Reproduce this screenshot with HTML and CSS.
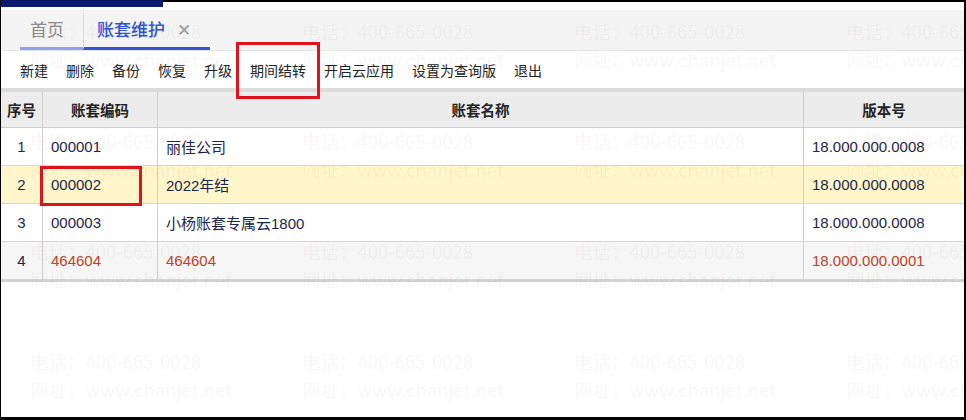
FILE: index.html
```html
<!DOCTYPE html>
<html lang="zh-CN">
<head>
  <meta charset="UTF-8">
  <title>账套维护</title>
  <link rel="stylesheet" href="styles.css">
</head>
<body>
  <div class="screen">

    <!-- top strip -->
    <div class="topline">
      <div class="brand"></div>
      <div class="rest"></div>
    </div>

    <!-- tabs -->
    <div class="tabbar">
      <div class="tab">首页</div>
      <div class="tab active">账套维护 <span class="close">✕</span></div>
    </div>

    <!-- toolbar -->
    <div class="toolbar">
      <span class="tool">新建</span>
      <span class="tool">删除</span>
      <span class="tool">备份</span>
      <span class="tool">恢复</span>
      <span class="tool">升级</span>
      <span class="tool">期间结转</span>
      <span class="tool">开启云应用</span>
      <span class="tool">设置为查询版</span>
      <span class="tool">退出</span>
    </div>

    <!-- account list -->
    <div class="grid">
      <div class="row head">
        <div class="cell c-no">序号</div>
        <div class="cell c-code">账套编码</div>
        <div class="cell c-name">账套名称</div>
        <div class="cell c-ver">版本号</div>
      </div>
      <div class="row">
        <div class="cell c-no">1</div>
        <div class="cell c-code">000001</div>
        <div class="cell c-name">丽佳公司</div>
        <div class="cell c-ver">18.000.000.0008</div>
      </div>
      <div class="row selected">
        <div class="cell c-no">2</div>
        <div class="cell c-code">000002</div>
        <div class="cell c-name">2022年结</div>
        <div class="cell c-ver">18.000.000.0008</div>
      </div>
      <div class="row">
        <div class="cell c-no">3</div>
        <div class="cell c-code">000003</div>
        <div class="cell c-name">小杨账套专属云1800</div>
        <div class="cell c-ver">18.000.000.0008</div>
      </div>
      <div class="row old">
        <div class="cell c-no">4</div>
        <div class="cell c-code">464604</div>
        <div class="cell c-name">464604</div>
        <div class="cell c-ver">18.000.000.0001</div>
      </div>
    </div>

    <!-- watermark over everything -->
    <div class="watermark">
      <div class="wm"><span>电话：400-665-0028</span><span>网址：www.chanjet.net</span></div>
      <div class="wm"><span>电话：400-665-0028</span><span>网址：www.chanjet.net</span></div>
      <div class="wm"><span>电话：400-665-0028</span><span>网址：www.chanjet.net</span></div>
      <div class="wm"><span>电话：400-665-0028</span><span>网址：www.chanjet.net</span></div>
      <div class="wm"><span>电话：400-665-0028</span><span>网址：www.chanjet.net</span></div>
      <div class="wm"><span>电话：400-665-0028</span><span>网址：www.chanjet.net</span></div>
      <div class="wm"><span>电话：400-665-0028</span><span>网址：www.chanjet.net</span></div>
      <div class="wm"><span>电话：400-665-0028</span><span>网址：www.chanjet.net</span></div>
      <div class="wm"><span>电话：400-665-0028</span><span>网址：www.chanjet.net</span></div>
      <div class="wm"><span>电话：400-665-0028</span><span>网址：www.chanjet.net</span></div>
      <div class="wm"><span>电话：400-665-0028</span><span>网址：www.chanjet.net</span></div>
      <div class="wm"><span>电话：400-665-0028</span><span>网址：www.chanjet.net</span></div>
      <div class="wm"><span>电话：400-665-0028</span><span>网址：www.chanjet.net</span></div>
      <div class="wm"><span>电话：400-665-0028</span><span>网址：www.chanjet.net</span></div>
      <div class="wm"><span>电话：400-665-0028</span><span>网址：www.chanjet.net</span></div>
      <div class="wm"><span>电话：400-665-0028</span><span>网址：www.chanjet.net</span></div>
    </div>

    <!-- red annotation boxes -->
    <div class="mark mark-tool"></div>
    <div class="mark mark-code"></div>
  </div>
</body>
</html>
```

FILE: styles.css
```css
body {
  margin: 0;
  padding: 0;
  background: #fff;
  font-family: "Noto Sans CJK SC", "Liberation Sans", sans-serif;
  overflow: hidden;
}

/* screenshot frame */
.screen {
  position: relative;
  width: 966px;
  height: 420px;
  box-sizing: border-box;
  border-left: 1px solid #000;
  border-right: 2px solid #000;
  border-bottom: 3px solid #000;
  display: flex;
  flex-direction: column;
  overflow: hidden;
}

.topline {
  display: flex;
  height: 7px;
  flex-shrink: 0;
}

.brand {
  width: 162px;
  background: #0c1a6e;
}

.rest {
  flex: 1;
  border-top: 2px solid #000;
}

/* Tabs */
.tabbar {
  margin-top: 3px;
  height: 40px;
  flex-shrink: 0;
  background: #f4f4f4;
  display: flex;
  align-items: flex-end;
  padding-left: 19px;
  border-bottom: 1px solid #e4e4e4;
}

.tab {
  height: 37px;
  box-sizing: border-box;
  border-bottom: 3px solid #8ea3e8;
  font-size: 17px;
  line-height: 32px;
  color: #8a8a8a;
  width: 63px;
  padding-left: 10px;
}

.tab.active {
  width: 127px;
  padding-left: 13px;
  border-bottom-color: #3657d2;
  color: #3151d6;
  font-weight: 500;
  border-left: 1px solid #dcdcdc;
}

.close {
  margin-left: 8px;
  font-size: 17px;
  color: #9a9a9a;
  font-weight: 400;
}

/* Toolbar */
.toolbar {
  height: 37px;
  flex-shrink: 0;
  display: flex;
  align-items: center;
  gap: 18px;
  padding-left: 19px;
  font-size: 14px;
  color: #222;
  border-bottom: 4px solid #dcdcdc;
}

/* Table */
.grid {
  font-family: "Liberation Sans", "Noto Sans CJK SC", sans-serif;
  font-size: 15px;
  color: #1d2648;
  border-bottom: 2px solid #d2d2d2;
}

.row {
  display: flex;
  height: 38px;
  border-bottom: 1px solid #d6d6d6;
  box-sizing: border-box;
  align-items: stretch;
}

.row.head {
  height: 36px;
  background: #ececec;
  font-family: "Noto Sans CJK SC", sans-serif;
  font-size: 14.5px;
  font-weight: 700;
  color: #222;
  border-bottom: 1px solid #cfcfcf;
}

.row.selected { background: #fff6cc; }
.row.old { background: #f6f6f6; color: #c2401f; }
.row.old .c-no { color: #1d2648; }

.cell {
  display: flex;
  align-items: center;
  box-sizing: border-box;
  border-right: 1px solid #cfcfcf;
  padding-left: 8px;
}

.c-no { width: 42px; justify-content: center; padding-left: 0; }
.c-code { width: 115px; }
.c-name { width: 646px; }
.c-ver { flex: 1; border-right: none; }

.head .cell { justify-content: center; padding-left: 0; }

/* watermark */
.watermark {
  position: absolute;
  left: 29px;
  top: 19px;
  display: grid;
  grid-template-columns: repeat(4, 272px);
  grid-auto-rows: 110px;
  pointer-events: none;
}

.wm {
  display: flex;
  flex-direction: column;
  gap: 4px;
  font-size: 18.5px;
  line-height: 24px;
  color: rgba(0, 0, 0, 0.055);
  white-space: nowrap;
}

/* red annotation boxes */
.mark {
  position: absolute;
  border: 3px solid #e0121c;
  box-sizing: border-box;
}

.mark-tool { left: 235px; top: 42px; width: 84px; height: 57px; }
.mark-code { left: 39px; top: 166px; width: 102px; height: 40px; }
```
